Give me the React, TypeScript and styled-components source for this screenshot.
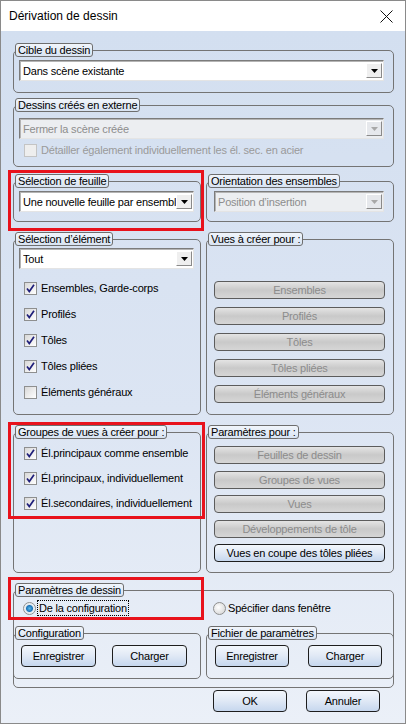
import { styled, createGlobalStyle } from "styled-components";

const GlobalStyle = createGlobalStyle`
  body {
    margin: 0;
    font-family: "Liberation Sans", Arial, sans-serif;
    font-size: 11px;
    letter-spacing: -0.2px;
    color: #000;
  }
`;

const Window = styled.div`
  width: 406px;
  height: 724px;
  box-sizing: border-box;
  border: 1px solid #8a8a8a;
  display: flex;
  flex-direction: column;
  position: relative;
  overflow: hidden;
`;

const TitleBar = styled.div`
  height: 30px;
  flex: none;
  background: #fff;
  display: flex;
  align-items: center;
  justify-content: space-between;
  padding: 0 12px 0 8px;
  font-size: 12px;
  letter-spacing: 0;
`;

const Client = styled.div`
  flex: 1;
  background: linear-gradient(180deg, #d3dff0 0%, #dce5f3 55%, #ebf0f8 100%);
  padding: 12px 11px 0 12px;
  display: flex;
  flex-direction: column;
`;

const Group = styled.fieldset<{ $mt?: number }>`
  margin: ${(p) => p.$mt ?? 0}px 0 0 0;
  padding: 0;
  min-width: 0;
  border: 1px solid #747474;
  border-radius: 5px;
`;

const Legend = styled.legend`
  margin-left: 1px;
  padding: 0 2px;
  height: 14px;
  box-sizing: border-box;
  line-height: 12px;
  font-size: 11px;
  border: 1px solid #6e6e6e;
  border-radius: 3px;
  background: linear-gradient(180deg, #f1f5fb, #d8e3f2);
  white-space: nowrap;
`;

const Body = styled.div<{ $pad: string; $gap?: number }>`
  padding: ${(p) => p.$pad};
  display: flex;
  flex-direction: column;
  gap: ${(p) => p.$gap ?? 0}px;
`;

const Columns = styled.div<{ $mt: number }>`
  display: grid;
  grid-template-columns: 188px 188px;
  column-gap: 5px;
  margin-top: ${(p) => p.$mt}px;
`;

const Field = styled.div<{ $disabled?: boolean }>`
  height: 21px;
  box-sizing: border-box;
  border: 1px solid;
  border-color: #7b7b7b #e4e4e4 #e4e4e4 #7b7b7b;
  box-shadow: inset 1px 1px 0 #b4b4b4;
  background: ${(p) => (p.$disabled ? "#eceef1" : "#fff")};
  color: ${(p) => (p.$disabled ? "#8d8d8d" : "#000")};
  display: flex;
  align-items: center;
  padding: 0 1px 0 3px;
`;

const FieldText = styled.span`
  flex: 1;
  overflow: hidden;
  white-space: nowrap;
`;

const DropButton = styled.span<{ $disabled?: boolean }>`
  width: 16px;
  height: 15px;
  box-sizing: border-box;
  border: 1px solid;
  border-color: #fff #8a8a8a #8a8a8a #fff;
  background: ${(p) => (p.$disabled ? "#e6e8ec" : "#efefef")};
  display: flex;
  align-items: center;
  justify-content: center;
  flex: none;
`;

const Check = styled.label<{ $disabled?: boolean }>`
  height: 14px;
  display: flex;
  align-items: center;
  gap: 4px;
  padding-left: 5px;
  color: ${(p) => (p.$disabled ? "#9a9a9a" : "#000")};
  white-space: nowrap;
`;

const Box = styled.span<{ $disabled?: boolean }>`
  width: 13px;
  height: 13px;
  box-sizing: border-box;
  border: 1px solid ${(p) => (p.$disabled ? "#c4c4c4" : "#8e8f8f")};
  background: ${(p) =>
    p.$disabled ? "#eeeeee" : "linear-gradient(135deg, #d8d8d8, #ffffff)"};
  display: flex;
  align-items: center;
  justify-content: center;
  flex: none;
`;

const Radio = styled.span<{ $on?: boolean }>`
  width: 13px;
  height: 13px;
  box-sizing: border-box;
  border-radius: 50%;
  border: 1px solid #8e8f8f;
  background: ${(p) =>
    p.$on
      ? "radial-gradient(circle at 50% 50%, #59b7e8 0, #1c73b8 3px, #dfe7ef 4px, #f6f6f6 6px)"
      : "radial-gradient(circle at 40% 40%, #ffffff, #cfcfcf)"};
  flex: none;
`;

const RadioRow = styled.div`
  display: grid;
  grid-template-columns: 190px 1fr;
  height: 14px;
  padding-left: 9px;
`;

const RadioLabel = styled.label`
  display: flex;
  align-items: center;
  gap: 2px;
  white-space: nowrap;
`;

const Focus = styled.span`
  outline: 1px dotted #000;
  padding: 0 1px;
  line-height: 14px;
`;

const Btn = styled.button<{ $h?: number; $w?: number }>`
  height: ${(p) => p.$h ?? 18}px;
  width: ${(p) => (p.$w ? `${p.$w}px` : "auto")};
  box-sizing: border-box;
  border: 1px solid #1e1e1e;
  border-radius: 4px;
  background: linear-gradient(180deg, #f3f7fc 0%, #e2eaf6 45%, #c6d7ee 100%);
  font-family: "Liberation Sans", Arial, sans-serif;
  font-size: 11px;
  letter-spacing: -0.2px;
  color: #000;
  padding: 0;
  flex: none;
  &:disabled {
    border-color: #5c5c5c;
    background: linear-gradient(180deg, #e4e4e4 0%, #c9c9c9 50%, #d6d6d6 100%);
    color: #8c8c8c;
  }
`;

const Row = styled.div<{ $pl: number; $gap: number }>`
  display: flex;
  padding-left: ${(p) => p.$pl}px;
  gap: ${(p) => p.$gap}px;
`;

const Inner = styled.div`
  margin: 11px -1px 0;
  display: grid;
  grid-template-columns: 188px 188px;
  column-gap: 5px;
`;

const Footer = styled.div`
  display: flex;
  justify-content: flex-end;
  gap: 19px;
  padding: 2px 14px 0 0;
`;

const Highlight = styled.div<{ $x: number; $y: number; $w: number; $h: number }>`
  position: absolute;
  left: ${(p) => p.$x}px;
  top: ${(p) => p.$y}px;
  width: ${(p) => p.$w}px;
  height: ${(p) => p.$h}px;
  box-sizing: border-box;
  border: 3px solid #e8121c;
  pointer-events: none;
`;

const Arrow = ({ disabled }: { disabled?: boolean }) => (
  <svg width="7" height="4" viewBox="0 0 7 4">
    <path d="M0 0h7L3.5 4z" fill={disabled ? "#a8a8a8" : "#000"} />
  </svg>
);

const Select = ({ value, disabled }: { value: string; disabled?: boolean }) => (
  <Field $disabled={disabled}>
    <FieldText>{value}</FieldText>
    <DropButton $disabled={disabled}>
      <Arrow disabled={disabled} />
    </DropButton>
  </Field>
);

const CheckBox = ({
  label,
  checked,
  disabled,
}: {
  label: string;
  checked?: boolean;
  disabled?: boolean;
}) => (
  <Check $disabled={disabled}>
    <Box $disabled={disabled}>
      {checked && (
        <svg width="9" height="9" viewBox="0 0 9 9">
          <path
            d="M1 4.5 L3.3 7.5 L8 0.8"
            fill="none"
            stroke="#1f1f7a"
            strokeWidth="1.7"
          />
        </svg>
      )}
    </Box>
    {label}
  </Check>
);

const CloseIcon = () => (
  <svg width="13" height="13" viewBox="0 0 13 13">
    <path d="M0.5 0.5L12.5 12.5M12.5 0.5L0.5 12.5" stroke="#111" strokeWidth="1" />
  </svg>
);

export default function App() {
  return (
    <>
      <GlobalStyle />
      <Window>
        <TitleBar>
          <span>Dérivation de dessin</span>
          <CloseIcon />
        </TitleBar>
        <Client>
          <Group>
            <Legend>Cible du dessin</Legend>
            <Body $pad="3px 9px 11px 5px">
              <Select value="Dans scène existante" />
            </Body>
          </Group>

          <Group $mt={5}>
            <Legend>Dessins créés en externe</Legend>
            <Body $pad="6px 9px 9px 5px" $gap={4}>
              <Select value="Fermer la scène créée" disabled />
              <CheckBox
                label="Détailler également individuellement les él. sec. en acier"
                disabled
              />
            </Body>
          </Group>

          <Columns $mt={7}>
            <Group>
              <Legend>Sélection de feuille</Legend>
              <Body $pad="3px 6px 9px 5px">
                <Select value="Une nouvelle feuille par ensemble" />
              </Body>
            </Group>
            <Group>
              <Legend>Orientation des ensembles</Legend>
              <Body $pad="3px 9px 9px 7px">
                <Select value="Position d’insertion" disabled />
              </Body>
            </Group>
          </Columns>

          <Columns $mt={10}>
            <Group>
              <Legend>Sélection d’élément</Legend>
              <Body $pad="2px 6px 15px 5px" $gap={12}>
                <Select value="Tout" />
                <CheckBox label="Ensembles, Garde-corps" checked />
                <CheckBox label="Profilés" checked />
                <CheckBox label="Tôles" checked />
                <CheckBox label="Tôles pliées" checked />
                <CheckBox label="Éléments généraux" />
              </Body>
            </Group>
            <Group>
              <Legend>Vues à créer pour :</Legend>
              <Body $pad="35px 8px 0 7px" $gap={8}>
                <Btn disabled>Ensembles</Btn>
                <Btn disabled>Profilés</Btn>
                <Btn disabled>Tôles</Btn>
                <Btn disabled>Tôles pliées</Btn>
                <Btn disabled>Éléments généraux</Btn>
              </Body>
            </Group>
          </Columns>

          <Columns $mt={10}>
            <Group>
              <Legend>Groupes de vues à créer pour :</Legend>
              <Body $pad="7px 4px 0 5px" $gap={11}>
                <CheckBox label="Él.principaux comme ensemble" checked />
                <CheckBox label="Él.principaux, individuellement" checked />
                <CheckBox label="Él.secondaires, individuellement" checked />
              </Body>
            </Group>
            <Group>
              <Legend>Paramètres pour :</Legend>
              <Body $pad="7px 8px 10px 7px" $gap={6.5}>
                <Btn disabled>Feuilles de dessin</Btn>
                <Btn disabled>Groupes de vues</Btn>
                <Btn disabled>Vues</Btn>
                <Btn disabled>Développements de tôle</Btn>
                <Btn>Vues en coupe des tôles pliées</Btn>
              </Body>
            </Group>
          </Columns>

          <Group $mt={10}>
            <Legend>Paramètres de dessin</Legend>
            <Body $pad="4px 0 8px 0">
              <RadioRow>
                <RadioLabel>
                  <Radio $on />
                  <Focus>De la configuration</Focus>
                </RadioLabel>
                <RadioLabel>
                  <Radio />
                  <span>Spécifier dans fenêtre</span>
                </RadioLabel>
              </RadioRow>
              <Inner>
                <Group>
                  <Legend>Configuration</Legend>
                  <Body $pad="5px 0 11px 0">
                    <Row $pl={7} $gap={16}>
                      <Btn $h={22} $w={75}>Enregistrer</Btn>
                      <Btn $h={22} $w={75}>Charger</Btn>
                    </Row>
                  </Body>
                </Group>
                <Group>
                  <Legend>Fichier de paramètres</Legend>
                  <Body $pad="5px 0 11px 0">
                    <Row $pl={8} $gap={19}>
                      <Btn $h={22} $w={74}>Enregistrer</Btn>
                      <Btn $h={22} $w={74}>Charger</Btn>
                    </Row>
                  </Body>
                </Group>
              </Inner>
            </Body>
          </Group>

          <Footer>
            <Btn $h={22} $w={74}>OK</Btn>
            <Btn $h={22} $w={74}>Annuler</Btn>
          </Footer>
        </Client>
        <Highlight $x={7} $y={169} $w={196} $h={61} />
        <Highlight $x={7} $y={421} $w={197} $h={97} />
        <Highlight $x={7} $y={576} $w={196} $h={43} />
      </Window>
    </>
  );
}
